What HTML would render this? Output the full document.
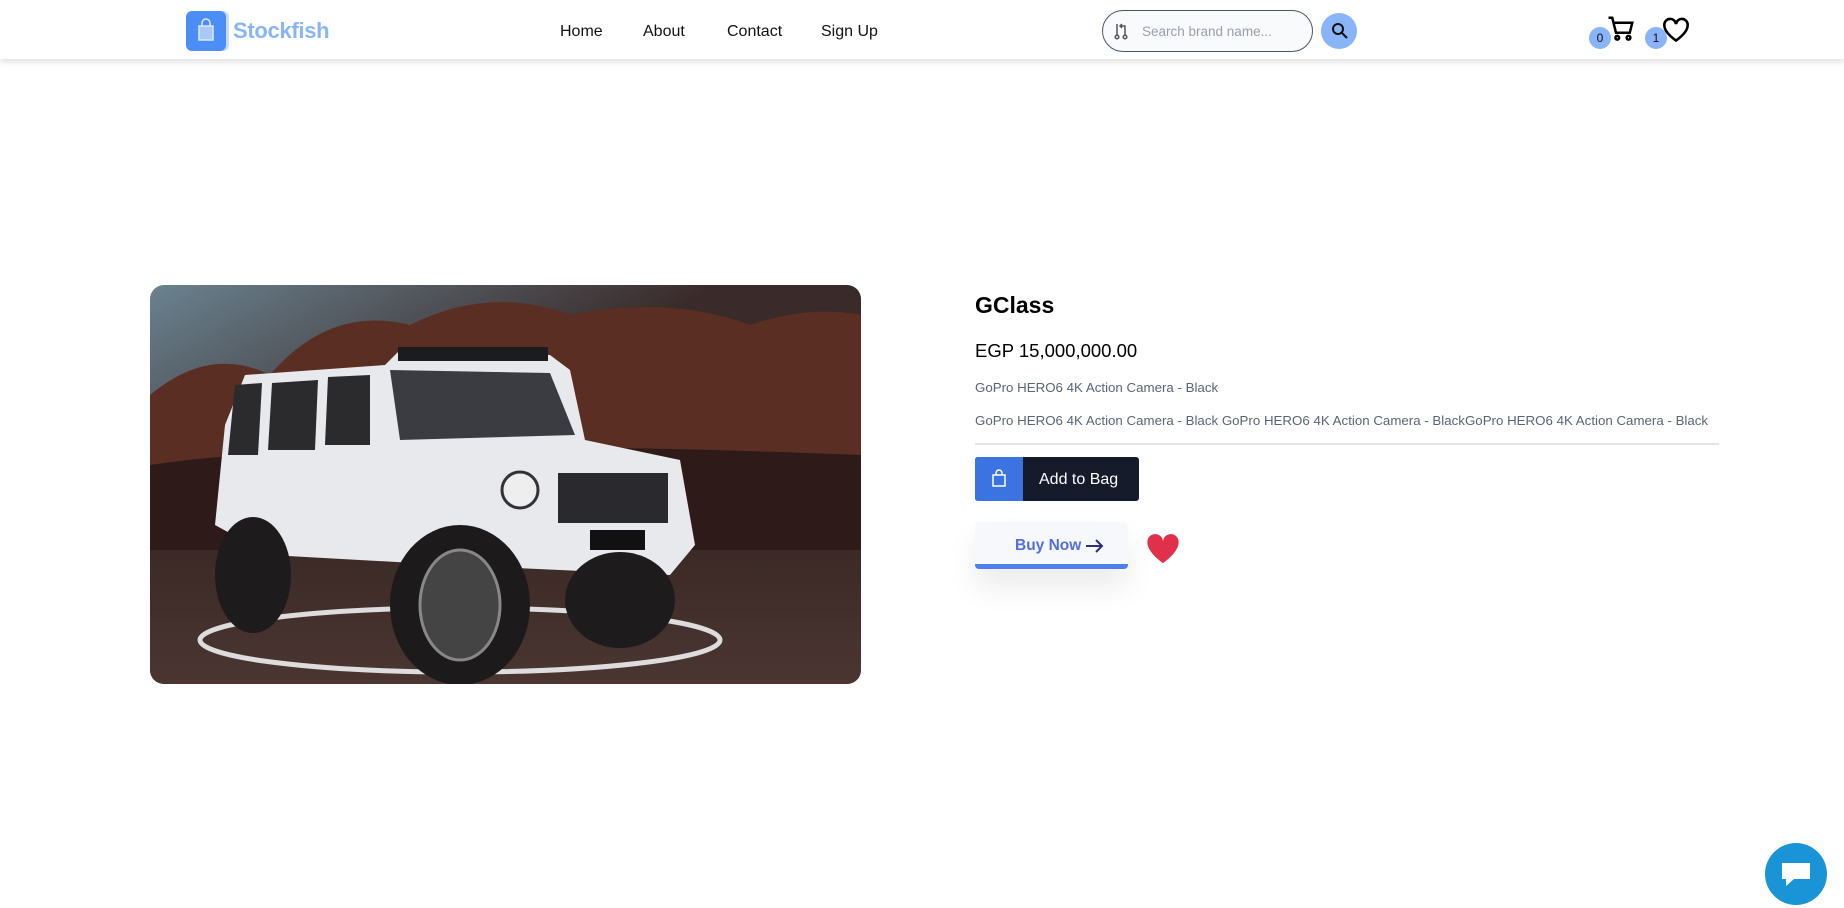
<!DOCTYPE html>
<html><head><meta charset="utf-8"><style>
*{margin:0;padding:0;box-sizing:border-box}
body{width:1844px;height:908px;background:#fff;font-family:"Liberation Sans",sans-serif;position:relative;overflow:hidden}
.nav{position:absolute;left:0;top:0;width:1844px;height:59px;background:#fff;box-shadow:0 3px 6px rgba(0,0,0,.12)}
.abs{position:absolute}
.link{position:absolute;top:23px;font-size:16px;color:#111}
.badge{position:absolute;width:22px;height:22px;border-radius:50%;background:#8ab4f8;font-size:12px;text-align:center;line-height:22px;color:#111}
</style></head><body>
<div class="nav">
  <div class="abs" style="left:186px;top:11px;width:40px;height:40px;background:#4b8ef7;border-radius:6px;box-shadow:3px 0 0 #c9dcfb"></div>
  <svg class="abs" style="left:196px;top:18px" width="20" height="24" viewBox="0 0 20 24"><path d="M3 8h14v14H3z" fill="#a9c8fb" stroke="#dbe8fd" stroke-width="1.5"/><path d="M6 8V5a4 4 0 0 1 8 0v3" fill="none" stroke="#dbe8fd" stroke-width="1.5"/></svg>
  <div class="abs" style="left:233px;top:18px;font-size:22px;font-weight:bold;color:#8ab4f8;letter-spacing:-0.3px">Stockfish</div>
  <div class="link" style="left:560px">Home</div>
  <div class="link" style="left:643px">About</div>
  <div class="link" style="left:727px">Contact</div>
  <div class="link" style="left:821px">Sign Up</div>
  <div class="abs" style="left:1102px;top:10px;width:211px;height:42px;border:1px solid #4a5568;border-radius:21px;background:#f8fafc"></div>
  <svg class="abs" style="left:1114px;top:22px" width="14" height="18" viewBox="0 0 14 18" fill="none" stroke="#555" stroke-width="1.5"><circle cx="3" cy="15" r="1.8"/><circle cx="11" cy="15" r="1.8"/><path d="M3 13V2M11 13V4H7M8 2l-2 2 2 2"/></svg>
  <div class="abs" style="left:1142px;top:24px;font-size:13.5px;color:#9aa0a8">Search brand name...</div>
  <div class="abs" style="left:1321px;top:13px;width:36px;height:36px;border-radius:50%;background:#8ab4f8"></div>
  <svg class="abs" style="left:1331px;top:22px" width="18" height="18" viewBox="0 0 18 18" fill="none" stroke="#111" stroke-width="2"><circle cx="7" cy="7" r="5"/><path d="M11 11l5 5"/></svg>
  <svg class="abs" style="left:1606px;top:14px" width="30" height="30" viewBox="0 0 24 24" fill="none" stroke="#000" stroke-width="2"><path d="M2 3h3l3 12h11l2-8H7"/><circle cx="9" cy="19" r="1.5"/><circle cx="18" cy="19" r="1.5"/></svg>
  <div class="badge" style="left:1589px;top:27px">0</div>
  <svg class="abs" style="left:1662px;top:17px" width="28" height="26" viewBox="0 0 24 22" fill="none" stroke="#000" stroke-width="2.2"><path d="M12 20S2 13.5 2 7a5 5 0 0 1 10-1 5 5 0 0 1 10 1c0 6.5-10 13-10 13z"/></svg>
  <div class="badge" style="left:1645px;top:27px">1</div>
</div>

<svg class="abs" style="left:150px;top:285px;border-radius:14px" width="711" height="399" viewBox="0 0 711 399">
  <defs>
    <linearGradient id="sky" x1="0" y1="0" x2="1" y2="1"><stop offset="0" stop-color="#6a8290"/><stop offset=".4" stop-color="#3a2b2a"/></linearGradient>
    <linearGradient id="road" x1="0" y1="0" x2="0" y2="1"><stop offset="0" stop-color="#3c2a26"/><stop offset="1" stop-color="#4a3531"/></linearGradient>
  </defs>
  <rect width="711" height="399" fill="url(#sky)"/>
  <path d="M0 110 Q60 60 120 90 Q180 20 260 40 Q340 0 420 30 Q520 10 600 40 Q660 20 711 30 V280 H0Z" fill="#5a2e22"/>
  <path d="M0 180 Q200 150 711 170 V280 H0Z" fill="#2e1a18"/>
  <rect y="265" width="711" height="134" fill="url(#road)"/>
  <ellipse cx="310" cy="355" rx="260" ry="32" fill="none" stroke="#ddd" stroke-width="5"/>
  <path d="M95 90 L235 80 L250 65 L400 70 L420 85 L435 155 L530 175 L545 260 L520 290 L300 280 L120 270 L65 240 L75 140 Z" fill="#e8e9ec"/>
  <rect x="248" y="62" width="150" height="14" fill="#1c1b1e"/>
  <path d="M85 100 L112 98 L108 170 L78 170 Z M122 98 L168 95 L165 165 L118 165 Z M178 92 L220 90 L220 160 L175 160Z" fill="#2b2a2d"/>
  <path d="M240 85 L400 88 L425 150 L250 155 Z" fill="#3a3c42"/>
  <rect x="408" y="188" width="110" height="50" fill="#2a2a2e"/>
  <rect x="440" y="245" width="55" height="20" fill="#111"/>
  <circle cx="370" cy="205" r="18" fill="#eee" stroke="#333" stroke-width="3"/>
  <ellipse cx="103" cy="290" rx="38" ry="58" fill="#1e1b1c"/>
  <ellipse cx="310" cy="320" rx="70" ry="80" fill="#1c1a1b"/>
  <ellipse cx="310" cy="320" rx="40" ry="55" fill="#444" stroke="#888" stroke-width="3"/>
  <ellipse cx="470" cy="315" rx="55" ry="48" fill="#1e1b1c"/>
</svg>

<div class="abs" style="left:975px;top:292px;font-size:23px;font-weight:bold;color:#000">GClass</div>
<div class="abs" style="left:975px;top:340px;font-size:18.5px;color:#000">EGP 15,000,000.00</div>
<div class="abs" style="left:975px;top:380px;font-size:13.3px;color:#5a6478">GoPro HERO6 4K Action Camera - Black</div>
<div class="abs" style="left:975px;top:413px;font-size:13.3px;color:#5a6478;white-space:nowrap">GoPro HERO6 4K Action Camera - Black GoPro HERO6 4K Action Camera - BlackGoPro HERO6 4K Action Camera - Black</div>
<div class="abs" style="left:975px;top:443px;width:744px;height:2px;background:#e3e4e8"></div>
<div class="abs" style="left:975px;top:457px;width:164px;height:44px;background:#161b2b;border-radius:3px;overflow:hidden">
  <div style="position:absolute;left:0;top:0;width:48px;height:44px;background:#3b74e0"></div>
  <svg style="position:absolute;left:16px;top:12px" width="16" height="18" viewBox="0 0 16 18" fill="none" stroke="#fff" stroke-width="1.5"><path d="M2 6h12v11H2z"/><path d="M5 6V4a3 3 0 0 1 6 0v2"/></svg>
  <div style="position:absolute;left:64px;top:14px;font-size:16px;color:#fff">Add to Bag</div>
</div>
<div class="abs" style="left:975px;top:522px;width:153px;height:47px;background:#f7f8fb;border-bottom:5px solid #4d80ee;border-radius:4px;box-shadow:0 18px 30px rgba(0,0,0,.08)">
  <div style="position:absolute;left:40px;top:15px;font-size:15.5px;color:#4f6fdc;font-weight:bold">Buy Now</div>
  <svg style="position:absolute;left:110px;top:16px" width="20" height="16" viewBox="0 0 20 16" fill="none" stroke="#2c2f7a" stroke-width="2"><path d="M1 8h16M11 2l6 6-6 6"/></svg>
</div>
<svg class="abs" style="left:1146px;top:533px" width="34" height="32" viewBox="0 0 24 22"><path d="M12 21S1 13.5 1 6.5a5.5 5.5 0 0 1 11-1 5.5 5.5 0 0 1 11 1C23 13.5 12 21 12 21z" fill="#e0304a"/></svg>

<div class="abs" style="left:1765px;top:843px;width:62px;height:62px;border-radius:50%;background:#1a94d6"></div>
<svg class="abs" style="left:1780px;top:860px" width="32" height="28" viewBox="0 0 32 28"><path d="M2 3h28v16H14l-8 7v-7H2z" fill="#fff"/></svg>
</body></html>
